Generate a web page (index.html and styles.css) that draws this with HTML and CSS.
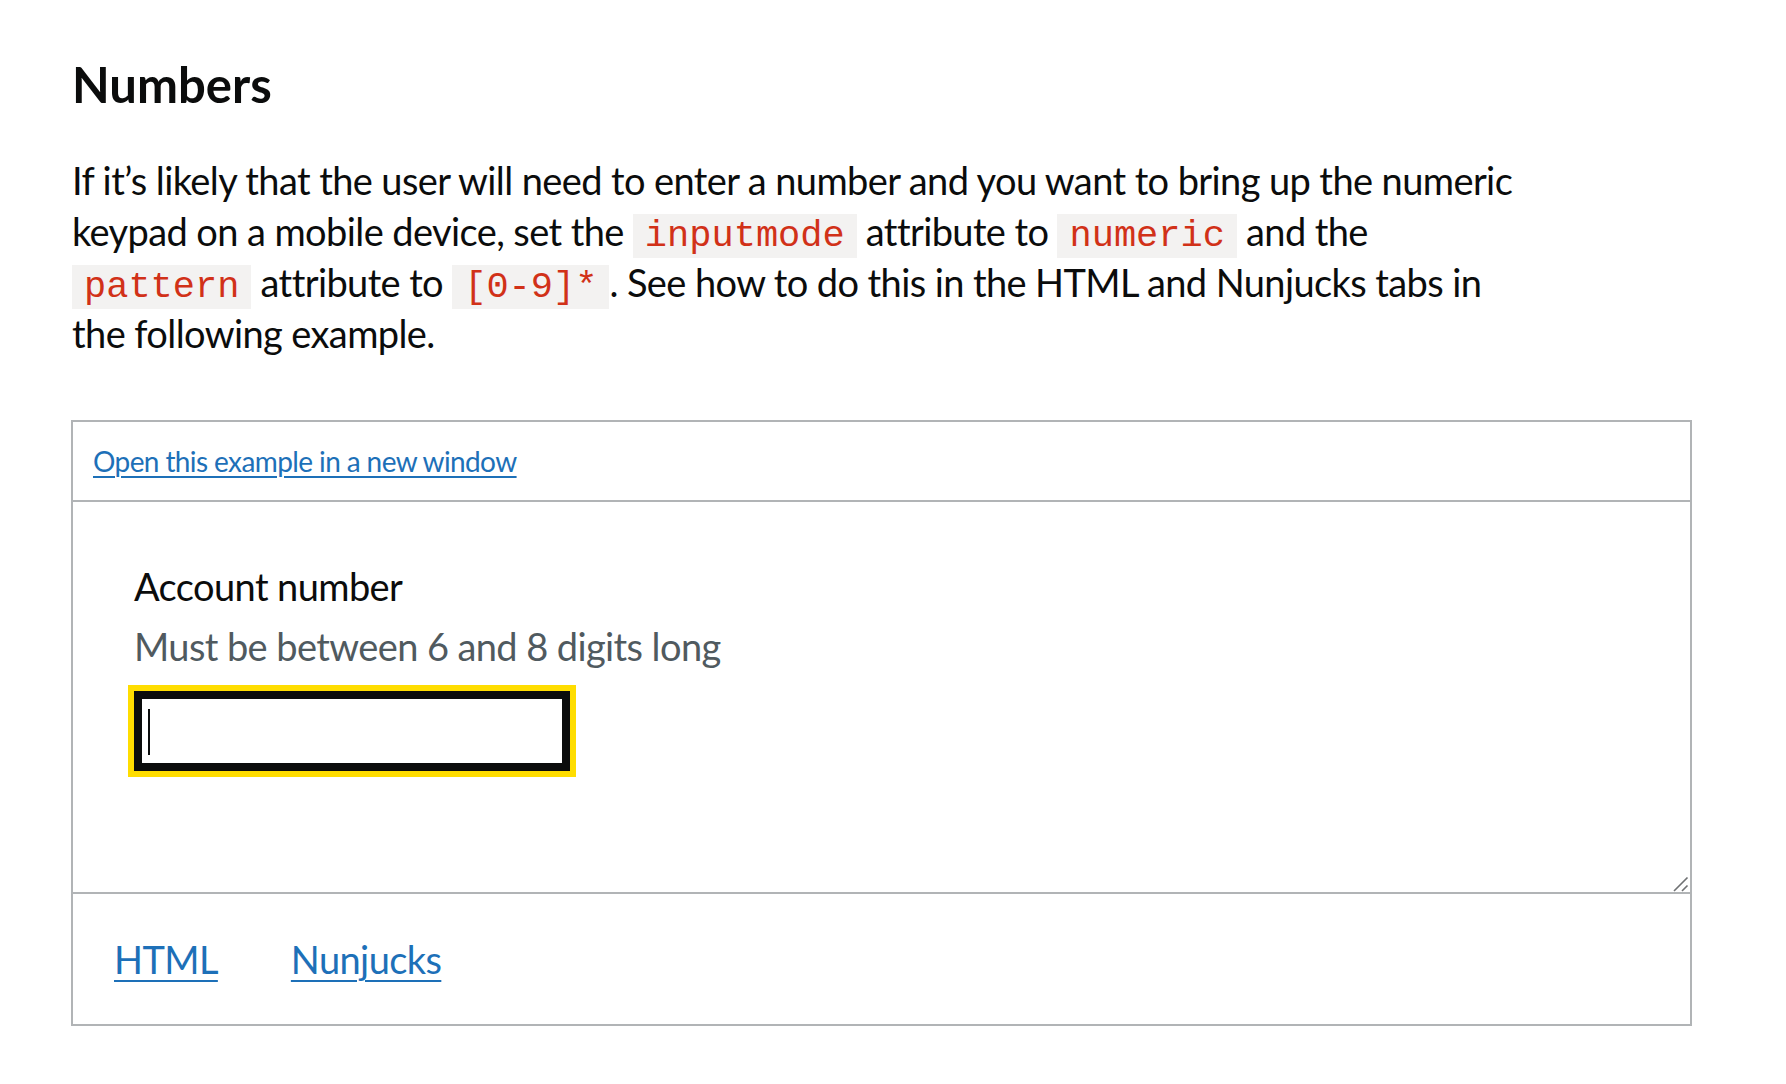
FILE: index.html
```html
<!DOCTYPE html>
<html lang="en">
<head>
<meta charset="utf-8">
<title>Numbers</title>
<link rel="stylesheet" href="styles.css">
</head>
<body>
<main class="page">
  <h3 class="heading">Numbers</h3>
  <p class="body">If it’s likely that the user will need to enter a number and you want to bring up the numeric<br>keypad on a mobile device, set the <code class="code">inputmode</code> attribute to <code class="code">numeric</code> and the<br><code class="code">pattern</code> attribute to <code class="code">[0-9]*</code>. See how to do this in the HTML and Nunjucks tabs in<br>the following example.</p>
  <div class="example">
    <div class="toolbar"><a class="link link-small" href="#">Open this example in a new window</a></div>
    <div class="frame">
      <div class="frame-body">
        <label class="label">Account number</label>
        <div class="hint">Must be between 6 and 8 digits long</div>
        <div class="input"><span class="caret"></span></div>
      </div>
      <svg class="grip" width="18" height="18" viewBox="0 0 18 18"><path d="M2 17 L15.5 3.5 M10 17 L15.5 11.5" stroke="#6f7173" stroke-width="1.6" fill="none"/></svg>
    </div>
    <div class="tabs"><a class="link tab" href="#">HTML</a><a class="link tab" href="#">Nunjucks</a></div>
  </div>
</main>
</body>
</html>
```
FILE: styles.css
```css
* { box-sizing: border-box; }
body {
  margin: 0;
  background: #ffffff;
  color: #0b0c0c;
  font-family: Lato, "Noto Sans", sans-serif;
  letter-spacing: -0.6px;
}
.page {
  padding: 54px 0 40px 72px;
}
.heading {
  margin: 0 0 41px;
  font-size: 49px;
  line-height: 60px;
  font-weight: 700;
  letter-spacing: 0;
}
.body {
  margin: 0 0 61px;
  font-size: 38px;
  line-height: 51px;
}
.code {
  font-family: "Liberation Mono", monospace;
  font-size: 37px;
  line-height: 1;
  letter-spacing: 0;
  color: #d13118;
  background: #f3f2f1;
  padding: 1px 12px;
}
.example {
  width: 1621px;
  margin-left: -1px;
  border: 2px solid #b1b4b6;
}
.toolbar {
  padding: 19px 20px;
  border-bottom: 2px solid #b1b4b6;
  line-height: 40px;
  font-size: 28px;
}
.link {
  color: #1d70b8;
  text-decoration: underline;
  text-decoration-thickness: 2px;
  text-underline-offset: 6px;
}
.link-small {
  text-underline-offset: 4px;
}
.frame {
  position: relative;
  height: 392px;
  border-bottom: 2px solid #b1b4b6;
}
.frame-body {
  padding: 59px 0 0 61px;
}
.label {
  display: block;
  font-size: 38px;
  line-height: 50px;
  margin-bottom: 10px;
}
.hint {
  font-size: 38px;
  line-height: 50px;
  color: #505a5f;
  margin-bottom: 20px;
}
.input {
  width: 436px;
  height: 80px;
  border: 8px solid #0b0c0c;
  outline: 6px solid #ffdd00;
  padding: 10px 0 0 6px;
  background: #fff;
}
.caret {
  display: block;
  width: 2px;
  height: 46px;
  background: #0b0c0c;
}
.grip {
  position: absolute;
  right: 0;
  bottom: 0;
}
.tabs {
  display: flex;
  gap: 73px;
  padding: 40px 41px;
  font-size: 38px;
  line-height: 50px;
}
```
